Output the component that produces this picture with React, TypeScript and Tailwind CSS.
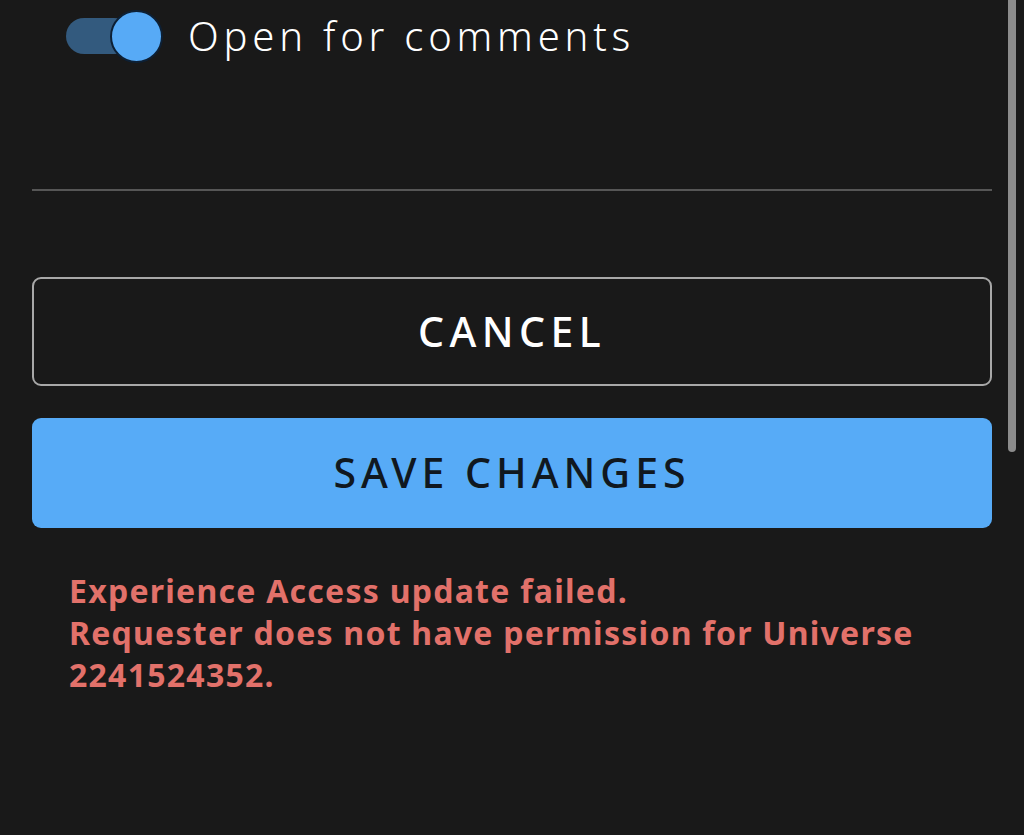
import React from "react";

export default function App() {
  return (
    <div className="relative w-[1024px] h-[835px] overflow-hidden bg-[#191919]" style={{ fontFamily: '"Noto Sans", "Open Sans", sans-serif' }}>
      <div className="absolute right-[8px] top-0 w-[8px] h-[452px] rounded-b-full bg-[#8c8c8c]" />
      <div className="flex flex-col px-[32px] pr-[32px]">
        <div className="flex items-center h-[72px] pl-[34px]">
          <div className="relative w-[98px] h-[54px] flex items-center">
            <div className="w-[66px] h-[36px] rounded-full bg-[#335a7e]" />
            <div className="absolute left-[44px] top-[1px] w-[53px] h-[53px] rounded-full bg-[#57aaf6] border-2 border-[#0d2035]" />
          </div>
          <span className="ml-[24px] text-[40px] font-light text-white tracking-[4.8px] leading-none">Open for comments</span>
        </div>
        <div className="mt-[117px] h-[2px] bg-[#565656]" />
        <button className="mt-[86px] h-[109px] rounded-[9px] border-2 border-[#a8a8a8] flex items-center justify-center text-[41px] text-white tracking-[5.4px] font-medium">CANCEL</button>
        <button className="mt-[32px] h-[110px] rounded-[9px] bg-[#57abf7] flex items-center justify-center text-[41px] text-[#101820] tracking-[5px] font-medium">SAVE CHANGES</button>
        <div className="mt-[42px] pl-[37px] text-[32px] leading-[42px] font-bold text-[#e2716a] tracking-[1.25px]">
          <div>Experience Access update failed.</div>
          <div>Requester does not have permission for Universe</div>
          <div>2241524352.</div>
        </div>
      </div>
    </div>
  );
}
